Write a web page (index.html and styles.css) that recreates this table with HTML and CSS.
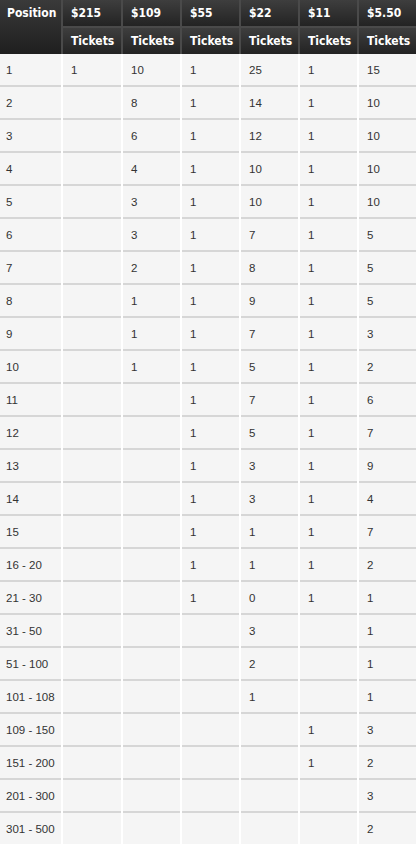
FILE: index.html
```html
<!DOCTYPE html>
<html>
<head>
<meta charset="utf-8">
<link rel="stylesheet" href="styles.css">
</head>
<body>
<div class="table">
  <div class="head">
    <div class="hc pos">Position</div>
    <div class="hc">$215</div>
    <div class="hc">$109</div>
    <div class="hc">$55</div>
    <div class="hc">$22</div>
    <div class="hc">$11</div>
    <div class="hc">$5.50</div>
    <div class="hc">Tickets</div>
    <div class="hc">Tickets</div>
    <div class="hc">Tickets</div>
    <div class="hc">Tickets</div>
    <div class="hc">Tickets</div>
    <div class="hc">Tickets</div>
  </div>
  <div class="body" id="body"></div>
</div>
<script src="app.js"></script>
</body>
</html>
```

FILE: app.js
```js
var rows = [
  ["1","1","10","1","25","1","15"],
  ["2","","8","1","14","1","10"],
  ["3","","6","1","12","1","10"],
  ["4","","4","1","10","1","10"],
  ["5","","3","1","10","1","10"],
  ["6","","3","1","7","1","5"],
  ["7","","2","1","8","1","5"],
  ["8","","1","1","9","1","5"],
  ["9","","1","1","7","1","3"],
  ["10","","1","1","5","1","2"],
  ["11","","","1","7","1","6"],
  ["12","","","1","5","1","7"],
  ["13","","","1","3","1","9"],
  ["14","","","1","3","1","4"],
  ["15","","","1","1","1","7"],
  ["16 - 20","","","1","1","1","2"],
  ["21 - 30","","","1","0","1","1"],
  ["31 - 50","","","","3","","1"],
  ["51 - 100","","","","2","","1"],
  ["101 - 108","","","","1","","1"],
  ["109 - 150","","","","","1","3"],
  ["151 - 200","","","","","1","2"],
  ["201 - 300","","","","","","3"],
  ["301 - 500","","","","","","2"]
];
var body = document.getElementById("body");
rows.forEach(function (r) {
  r.forEach(function (v, i) {
    var d = document.createElement("div");
    d.className = i === 0 ? "c first" : "c";
    d.textContent = v;
    body.appendChild(d);
  });
});
```

FILE: styles.css
```css
html, body {
  margin: 0;
  padding: 0;
  background: #ffffff;
}
.table {
  width: 416px;
}
.head {
  display: grid;
  grid-template-columns: 61px 58px 57px 57px 57px 57px 57px;
  grid-template-rows: 26px 26px;
  gap: 2px;
  background: #4a4a4a;
}
.hc {
  background: linear-gradient(#3e3e3e, #232323);
  color: #ffffff;
  font-family: "DejaVu Sans Condensed", "DejaVu Sans", sans-serif;
  font-stretch: condensed;
  font-weight: bold;
  font-size: 12px;
  line-height: 26px;
  padding-left: 8px;
  white-space: nowrap;
}
.hc.pos {
  grid-row: span 2;
  padding-left: 7px;
  background: linear-gradient(#3a3a3a, #1f1f1f);
}
.body {
  display: grid;
  grid-template-columns: 61px 58px 57px 57px 57px 57px 57px;
  grid-auto-rows: 33px;
  column-gap: 2px;
  background: #ffffff;
}
.c {
  background: #f5f5f5;
  border-bottom: 2px solid #d6d6d6;
  color: #333333;
  font-family: "Liberation Sans", Arial, sans-serif;
  font-size: 11.5px;
  line-height: 30px;
  padding-top: 1px;
  padding-left: 8px;
  white-space: nowrap;
}
.c.first {
  padding-left: 6px;
}
```
